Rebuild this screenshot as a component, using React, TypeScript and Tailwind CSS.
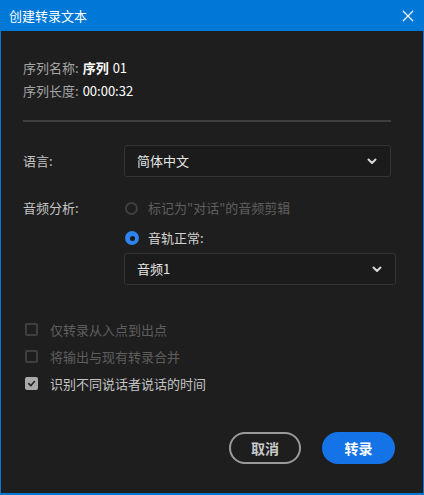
import React from "react";

const font = { fontFamily: '"Noto Sans CJK SC", "Noto Sans", sans-serif' };

function Chevron() {
  return (
    <svg width="12" height="12" viewBox="0 0 12 12" className="text-[#d8d8d8]">
      <path d="M2.5 4.5 L6 8 L9.5 4.5" fill="none" stroke="currentColor" strokeWidth="2" strokeLinecap="round" strokeLinejoin="round" />
    </svg>
  );
}

function Select({ value, className }: { value: string; className: string }) {
  return (
    <div className={`flex h-[32px] items-center justify-between rounded-[3px] border border-[#333] bg-[#1b1b1b] pl-[12px] pr-[12px] text-[13px] text-[#e6e6e6] ${className}`}>
      <span>{value}</span>
      <Chevron />
    </div>
  );
}

function Check({ label, checked }: { label: string; checked?: boolean }) {
  return (
    <div className="flex h-[27px] items-center">
      <div className={`ml-[24px] flex h-[13px] w-[13px] items-center justify-center rounded-[2px] ${checked ? "bg-[#a9a9a9]" : "border-2 border-[#3f3f3f]"}`}>
        {checked && (
          <svg width="9" height="9" viewBox="0 0 10 10">
            <path d="M2 5.2 L4.2 7.4 L8.2 2.8" fill="none" stroke="#222" strokeWidth="1.8" strokeLinecap="round" strokeLinejoin="round" />
          </svg>
        )}
      </div>
      <span className={`ml-[12px] text-[13px] ${checked ? "text-[#c4c4c4]" : "text-[#5e5e5e]"}`}>{label}</span>
    </div>
  );
}

export default function App() {
  return (
    <div style={font} className="flex h-[495px] w-[424px] flex-col bg-[#0078d7] px-[1px] pb-[2px]">
      <div className="flex h-[31px] items-center justify-between pl-[8px] pr-[9px]">
        <span className="text-[13px] text-white">创建转录文本</span>
        <svg width="12" height="12" viewBox="0 0 12 12">
          <path d="M1 1 L11 11 M11 1 L1 11" stroke="white" strokeWidth="1.2" />
        </svg>
      </div>
      <div className="flex flex-1 flex-col bg-[#1e1e1e] pl-[22px] pr-[32px] text-[13px]">
        <div className="mt-[26px] flex h-[22px] items-center">
          <span className="text-[#a4a4a4]">序列名称:</span>
          <span className="ml-[4px] font-bold text-white">序列</span>
          <span className="ml-[4px] text-white">01</span>
        </div>
        <div className="mt-[1px] flex h-[22px] items-center">
          <span className="text-[#a4a4a4]">序列长度:</span>
          <span className="ml-[4px] text-white">00:00:32</span>
        </div>
        <div className="mt-[18px] h-[2px] bg-[#3e3e3e]" />
        <div className="mt-[23px] flex items-center">
          <span className="w-[101px] text-[#c4c4c4]">语言:</span>
          <Select value="简体中文" className="flex-1" />
        </div>
        <div className="mt-[20px] flex">
          <span className="w-[101px] pt-[1px] text-[#c4c4c4]">音频分析:</span>
          <div className="flex flex-1 flex-col">
            <div className="flex h-[22px] items-center">
              <div className="ml-[1px] h-[13px] w-[13px] rounded-full border-2 border-[#3f3f3f]" />
              <span className="ml-[10px] text-[#5e5e5e]">标记为"对话"的音频剪辑</span>
            </div>
            <div className="mt-[8px] flex h-[22px] items-center">
              <div className="ml-[1px] flex h-[14px] w-[14px] items-center justify-center rounded-full bg-[#2d83ec]">
                <div className="h-[5px] w-[5px] rounded-full bg-[#1a1a1a]" />
              </div>
              <span className="ml-[9px] text-[#d4d4d4]">音轨正常:</span>
            </div>
            <Select value="音频1" className="-mr-[5px] mt-[4px]" />
          </div>
        </div>
        <div className="-ml-[22px] mt-[31px] flex flex-col">
          <Check label="仅转录从入点到出点" />
          <Check label="将输出与现有转录合并" />
          <Check label="识别不同说话者说话的时间" checked />
        </div>
        <div className="-mr-[5px] mt-[35px] flex justify-end gap-[21px] pr-[1px]">
          <div className="flex h-[32px] w-[72px] items-center justify-center rounded-full border-2 border-[#9a9a9a] text-[14px] font-bold text-[#c8c8c8]">取消</div>
          <div className="flex h-[32px] w-[73px] items-center justify-center rounded-full bg-[#1473e6] text-[14px] font-bold text-white">转录</div>
        </div>
      </div>
    </div>
  );
}
